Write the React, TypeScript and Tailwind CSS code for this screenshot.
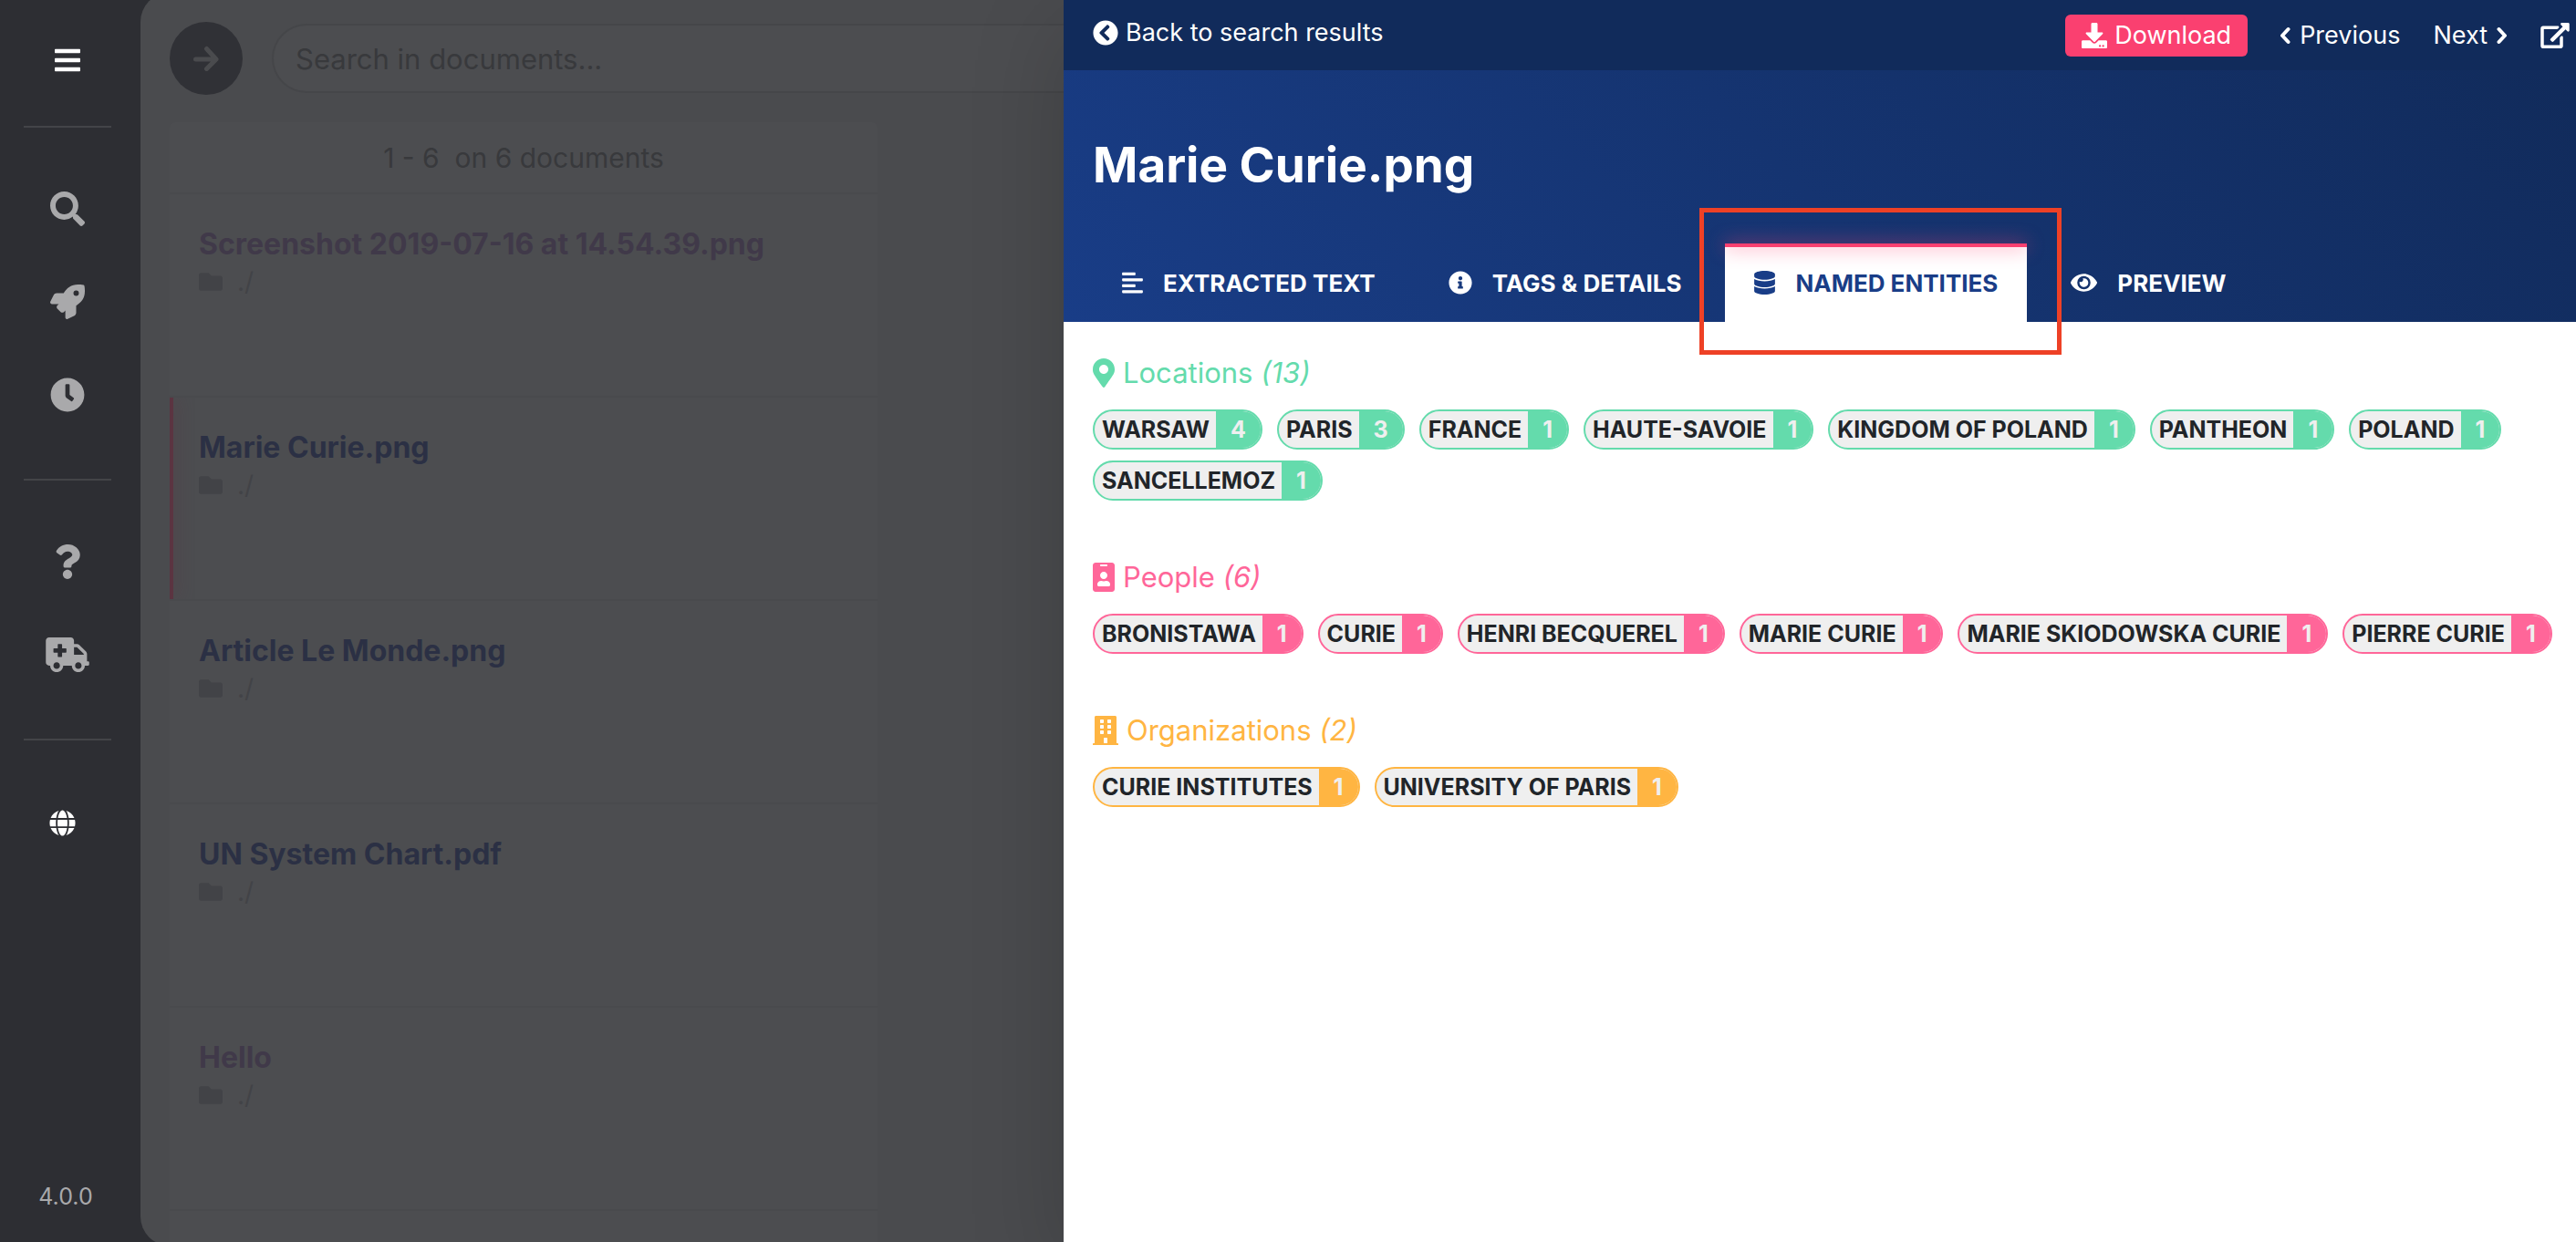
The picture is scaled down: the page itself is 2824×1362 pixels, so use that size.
import type { ReactNode } from "react";
import {
  FaAlignLeft,
  FaAmbulance,
  FaBars,
  FaBuilding,
  FaChevronCircleLeft,
  FaClock,
  FaDatabase,
  FaDownload,
  FaEye,
  FaFolder,
  FaGlobe,
  FaIdBadge,
  FaInfoCircle,
  FaMapMarkerAlt,
  FaQuestion,
  FaRocket,
  FaSearch,
} from "react-icons/fa";

const documents = [
  { name: "Screenshot 2019-07-16 at 14.54.39.png", visited: true, selected: false },
  { name: "Marie Curie.png", visited: false, selected: true },
  { name: "Article Le Monde.png", visited: false, selected: false },
  { name: "UN System Chart.pdf", visited: false, selected: false },
  { name: "Hello", visited: true, selected: false },
];

type Tone = { text: string; border: string; fill: string };

const tones: Record<string, Tone> = {
  green: { text: "text-[#64dbac]", border: "border-[#64dbac]", fill: "bg-[#64dbac]" },
  pink: { text: "text-[#ff6699]", border: "border-[#ff6699]", fill: "bg-[#ff6699]" },
  orange: { text: "text-[#ffb542]", border: "border-[#ffb542]", fill: "bg-[#ffb542]" },
};

const sections: {
  title: string;
  total: number;
  tone: Tone;
  icon: ReactNode;
  entities: [string, number][];
}[] = [
  {
    title: "Locations",
    total: 13,
    tone: tones.green,
    icon: <FaMapMarkerAlt className="h-8 w-6" />,
    entities: [
      ["WARSAW", 4],
      ["PARIS", 3],
      ["FRANCE", 1],
      ["HAUTE-SAVOIE", 1],
      ["KINGDOM OF POLAND", 1],
      ["PANTHEON", 1],
      ["POLAND", 1],
      ["SANCELLEMOZ", 1],
    ],
  },
  {
    title: "People",
    total: 6,
    tone: tones.pink,
    icon: <FaIdBadge className="h-8 w-6" />,
    entities: [
      ["BRONISTAWA", 1],
      ["CURIE", 1],
      ["HENRI BECQUEREL", 1],
      ["MARIE CURIE", 1],
      ["MARIE SKIODOWSKA CURIE", 1],
      ["PIERRE CURIE", 1],
    ],
  },
  {
    title: "Organizations",
    total: 2,
    tone: tones.orange,
    icon: <FaBuilding className="h-8 w-7" />,
    entities: [
      ["CURIE INSTITUTES", 1],
      ["UNIVERSITY OF PARIS", 1],
    ],
  },
];

function ExternalLinkIcon() {
  return (
    <svg viewBox="0 0 576 512" className="h-7 w-8" fill="currentColor" aria-hidden="true">
      <path d="M576 24v127.984c0 21.461-25.96 31.98-40.971 16.971l-35.707-35.709-243.523 243.523c-9.373 9.373-24.568 9.373-33.941 0l-22.627-22.627c-9.373-9.373-9.373-24.569 0-33.941L442.756 76.676l-35.703-35.705C391.982 25.9 402.656 0 424.024 0H552c13.255 0 24 10.745 24 24zM407.029 270.794l-16 16A23.999 23.999 0 0 0 384 303.765V448H64V128h264a24.003 24.003 0 0 0 16.97-7.029l16-16C376.089 89.851 365.381 64 344 64H48C21.49 64 0 85.49 0 112v352c0 26.51 21.49 48 48 48h352c26.51 0 48-21.49 48-48V287.764c0-21.382-25.852-32.09-40.971-16.97z" />
    </svg>
  );
}

function Angle({ flip = false }: { flip?: boolean }) {
  return (
    <svg
      viewBox="0 0 12 20"
      className={flip ? "h-5 w-3 rotate-180" : "h-5 w-3"}
      fill="none"
      stroke="currentColor"
      strokeWidth="4"
      strokeLinecap="round"
      strokeLinejoin="round"
      aria-hidden="true"
    >
      <path d="M9.5 3 3 10l6.5 7" />
    </svg>
  );
}

function NavButton({ label, children }: { label: string; children: ReactNode }) {
  return (
    <button type="button" aria-label={label} className="flex h-10 items-center justify-center text-[#a9a9ab]">
      {children}
    </button>
  );
}

function Sidebar() {
  return (
    <nav className="flex w-[154px] flex-none flex-col items-center bg-[#2d2e33] pr-[6px]">
      <button type="button" aria-label="Menu" className="mt-[46px] flex h-10 items-center text-white">
        <FaBars className="h-8 w-7" />
      </button>
      <div className="mt-[52px] h-[2px] w-24 bg-[#434448]" />
      <div className="mt-[69px] flex flex-col gap-[62px]">
        <NavButton label="Search">
          <FaSearch className="size-[38px]" />
        </NavButton>
        <NavButton label="Launch">
          <FaRocket className="size-[38px]" />
        </NavButton>
        <NavButton label="History">
          <FaClock className="size-[38px]" />
        </NavButton>
      </div>
      <div className="mt-[72px] h-[2px] w-24 bg-[#434448]" />
      <div className="mt-[69px] flex flex-col gap-[62px]">
        <NavButton label="Help">
          <FaQuestion className="size-[38px]" />
        </NavButton>
        <NavButton label="Support">
          <FaAmbulance className="h-[38px] w-12" />
        </NavButton>
      </div>
      <div className="mt-[72px] h-[2px] w-24 bg-[#434448]" />
      <button type="button" aria-label="Language" className="mt-[76px] mr-3 text-white">
        <FaGlobe className="size-[29px]" />
      </button>
      <span className="mt-auto mb-8 pr-1 text-[25px] leading-9 text-[#a9a9ab]">4.0.0</span>
    </nav>
  );
}

function SearchPane() {
  return (
    <main className="w-[1012px] flex-none bg-[#2d2e33]">
      <div className="-mt-2 flex h-[calc(100%+12px)] flex-col overflow-hidden rounded-l-[32px] bg-[#4a4b4e] pt-8 pl-8">
        <form className="flex flex-none items-center gap-8">
          <button
            type="button"
            aria-label="Submit search"
            className="flex size-20 flex-none items-center justify-center rounded-full bg-[#303136] text-[#4a4b4e]"
          >
            <svg
              viewBox="0 0 28 28"
              className="size-7"
              fill="none"
              stroke="currentColor"
              strokeWidth="5"
              strokeLinecap="round"
              strokeLinejoin="round"
              aria-hidden="true"
            >
              <path d="M2.500 15H24M14.500 3.500 25 15 14.500 25.500" />
            </svg>
          </button>
          <input
            aria-label="Search in documents"
            placeholder="Search in documents..."
            className="h-[76px] min-w-0 flex-1 rounded-l-full border-2 border-r-0 border-[#454649] bg-[#4c4d50] pl-6 text-[31px] text-[#38393c] placeholder:text-[#38393c]"
          />
        </form>
        <section className="mt-[30px] w-[776px] flex-1 rounded-t-md bg-[#4c4d50]">
          <p className="flex h-[79px] items-center justify-center border-b-2 border-[#494a4d] pt-[2px] text-[30px] whitespace-pre text-[#38393c]">
            1 - 6  on 6 documents
          </p>
          <ul>
            {documents.map((doc) => (
              <li key={doc.name} className="relative h-[223px] overflow-hidden border-b-2 border-[#494a4d] px-8 pt-8">
                {doc.selected && (
                  <span className="absolute inset-y-0 left-0 w-1 bg-[#5b3441] shadow-[0_0_20px_#5b3441]" />
                )}
                <a
                  href="#"
                  className={
                    doc.visited
                      ? "block text-[32px] leading-[46px] font-bold text-[#403949]"
                      : "block text-[32px] leading-[46px] font-bold text-[#2b3044]"
                  }
                >
                  {doc.name}
                </a>
                <p className="flex items-center gap-4 text-[28px] leading-9 text-[#424347]">
                  <FaFolder className="size-[26px]" />
                  ./
                </p>
              </li>
            ))}
          </ul>
        </section>
      </div>
    </main>
  );
}

function Tab({ icon, label, active = false }: { icon: ReactNode; label: string; active?: boolean }) {
  return (
    <button
      type="button"
      role="tab"
      aria-selected={active}
      className={
        active
          ? "relative flex h-[86px] items-center gap-[22px] bg-white px-8 text-[26px] font-bold text-[#193d87]"
          : "relative flex h-[86px] items-center gap-[22px] px-8 text-[26px] font-bold text-white"
      }
    >
      {active && <span className="absolute inset-x-0 top-0 h-1 bg-[#fa4070] shadow-[0_0_20px_#fa4070]" />}
      {icon}
      {label}
      {active && (
        <span className="pointer-events-none absolute -top-[39px] -right-[38px] -bottom-9 -left-[28px] z-10 border-[5px] border-[#ee4126]" />
      )}
    </button>
  );
}

function EntityChip({ name, count, tone }: { name: string; count: number; tone: Tone }) {
  return (
    <button
      type="button"
      className={`flex h-11 overflow-hidden rounded-full border-2 bg-[#efefef] text-[25px] leading-10 font-bold ${tone.border}`}
    >
      <span className="pr-[7px] pl-2 text-[#212529]">{name}</span>
      <span className={`px-4 text-[#efefef] ${tone.fill}`}>{count}</span>
    </button>
  );
}

function DocumentDrawer() {
  return (
    <aside className="relative z-10 min-w-0 flex-1 bg-white shadow-[0_32px_96px_rgba(0,0,0,0.175)]">
      <div className="flex h-[77px] items-center bg-[#112b5b] pr-[7px] pl-8 text-[27px] leading-[42px] text-white">
        <a href="#" className="flex items-center gap-2 pb-[5px]">
          <FaChevronCircleLeft className="size-7" />
          Back to search results
        </a>
        <button type="button" className="ml-auto flex h-[46px] items-center gap-2 rounded-md bg-[#fa4070] px-[18px]">
          <FaDownload className="size-7" />
          Download
        </button>
        <button type="button" className="ml-[35px] flex items-center gap-[10px]">
          <Angle />
          Previous
        </button>
        <button type="button" className="ml-9 flex items-center gap-[10px]">
          Next
          <Angle flip />
        </button>
        <button type="button" aria-label="Open in a new window" className="ml-9">
          <ExternalLinkIcon />
        </button>
      </div>
      <header className="flex h-[276px] flex-col justify-between bg-linear-45 from-[#193d87] to-[#112b5b] px-8 pt-[70px]">
        <h1 className="text-[53px] leading-[68px] font-bold text-white">Marie Curie.png</h1>
        <div role="tablist" className="flex gap-4">
          <Tab icon={<FaAlignLeft className="h-[26px] w-[23px]" />} label="EXTRACTED TEXT" />
          <Tab icon={<FaInfoCircle className="size-[26px]" />} label="TAGS & DETAILS" />
          <Tab icon={<FaDatabase className="h-[26px] w-[23px]" />} label="NAMED ENTITIES" active />
          <Tab icon={<FaEye className="h-[26px] w-[29px]" />} label="PREVIEW" />
        </div>
      </header>
      <div className="flex flex-col gap-16 pt-9 pl-8">
        {sections.map((section) => (
          <section key={section.title}>
            <h2 className={`flex h-10 items-center gap-[9px] text-[31px] ${section.tone.text}`}>
              {section.icon}
              <span>
                {section.title} <i>({section.total})</i>
              </span>
            </h2>
            <div className="mt-5 flex flex-wrap gap-x-4 gap-y-3">
              {section.entities.map(([name, count]) => (
                <EntityChip key={name} name={name} count={count} tone={section.tone} />
              ))}
            </div>
          </section>
        ))}
      </div>
    </aside>
  );
}

export default function App() {
  return (
    <div className="flex h-screen overflow-hidden font-[Inter,'Liberation_Sans',sans-serif]">
      <Sidebar />
      <SearchPane />
      <DocumentDrawer />
    </div>
  );
}
